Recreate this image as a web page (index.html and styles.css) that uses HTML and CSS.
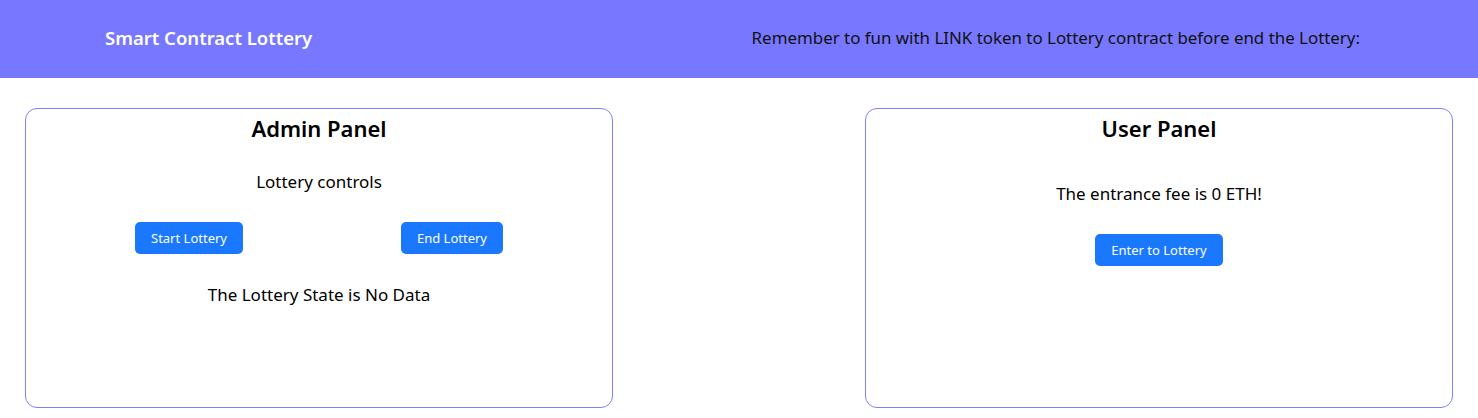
FILE: index.html
```html
<!DOCTYPE html>
<html>
<head>
<meta charset="utf-8">
<link rel="stylesheet" href="styles.css">
</head>
<body>
<header class="topbar">
  <div class="brand">Smart Contract Lottery</div>
  <div class="notice">Remember to fun with LINK token to Lottery contract before end the Lottery:</div>
</header>
<main class="panels">
  <section class="panel">
    <h2 class="panel-title">Admin Panel</h2>
    <p class="text controls">Lottery controls</p>
    <div class="btn-row">
      <button class="btn">Start Lottery</button>
      <button class="btn">End Lottery</button>
    </div>
    <p class="text state">The Lottery State is No Data</p>
  </section>
  <section class="panel">
    <h2 class="panel-title">User Panel</h2>
    <p class="text fee">The entrance fee is 0 ETH!</p>
    <div class="btn-center">
      <button class="btn">Enter to Lottery</button>
    </div>
  </section>
</main>
</body>
</html>
```
FILE: styles.css
```css
* { box-sizing: border-box; }
body {
  margin: 0;
  font-family: "Noto Sans", "Open Sans", sans-serif;
  color: #000;
  background: #fff;
}
.topbar {
  height: 78px;
  background: #7777ff;
  display: flex;
  align-items: center;
  justify-content: space-between;
  padding: 0 118px 4px 105px;
}
.brand {
  color: #fff;
  font-weight: 600;
  font-size: 18.5px;
}
.notice {
  color: #111;
  font-size: 16.9px;
}
.panels {
  display: flex;
  justify-content: space-between;
  padding: 30px 25px 0 25px;
}
.panel {
  width: 588px;
  height: 300px;
  border: 1px solid #7f7fff;
  border-radius: 12px;
  text-align: center;
}
.panel-title {
  margin: 4px 0 0 0;
  font-size: 22px;
  font-weight: 600;
  line-height: 30px;
}
.text {
  font-size: 17px;
  margin: 0;
  line-height: 24px;
}
.controls { margin-top: 27px; }
.btn-row {
  display: flex;
  justify-content: space-between;
  padding: 0 109px;
  margin-top: 28px;
}
.btn {
  background: #1a78ff;
  color: #fff;
  border: none;
  border-radius: 5px;
  font-family: inherit;
  font-size: 13px;
  height: 32px;
  padding: 0 16px;
}
.state { margin-top: 29px; }
.fee { margin-top: 39px; }
.btn-center { margin-top: 28px; }
```
